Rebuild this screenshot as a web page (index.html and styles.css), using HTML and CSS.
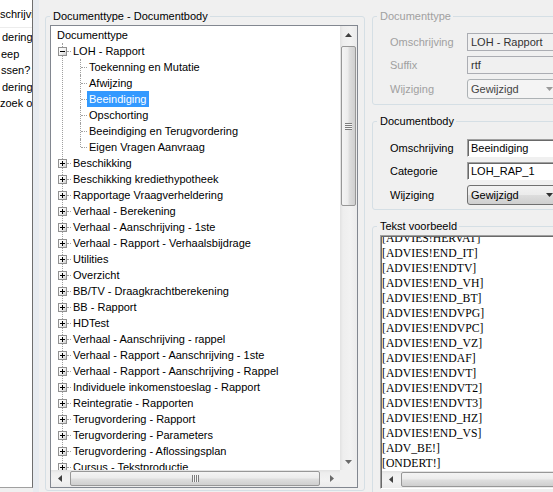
FILE: index.html
```html
<!DOCTYPE html>
<html>
<head>
<meta charset="utf-8">
<link rel="stylesheet" href="styles.css">
</head>
<body>
<svg width="0" height="0" class="defs">
  <defs>
    <linearGradient id="expg" x1="0" y1="0" x2="1" y2="1">
      <stop offset="0" stop-color="#ffffff"/>
      <stop offset="0.5" stop-color="#f4f4f4"/>
      <stop offset="1" stop-color="#c8c8c8"/>
    </linearGradient>
  </defs>
</svg>
<div class="app">
  <div class="sidelist">
    <div class="sl-head">schrijving</div>
    <div class="sl-rows">
      <div class="sl-row">deringen</div>
      <div class="sl-row sl-tight">eep</div>
      <div class="sl-row sl-tight">ssen?</div>
      <div class="sl-row">deringen</div>
      <div class="sl-row sl-zero">zoek om</div>
    </div>
  </div>
  <div class="sep"></div>

  <fieldset class="group main-group">
    <legend>Documenttype - Documentbody</legend>
    <div class="tree">
      <div class="tree-view">
        <div class="row root"><span class="lbl">Documenttype</span></div>
        <div class="lvl1">
          <div class="row"><svg class="exp" width="9" height="9" viewBox="0 0 9 9"><rect x="0.5" y="0.5" width="8" height="8" fill="url(#expg)" stroke="#919191"/><path d="M2 4.5h5" stroke="#000"/></svg><i class="hl"></i><span class="lbl">LOH - Rapport</span></div>
          <div class="kids">
            <div class="row l2"><i class="vl"></i><i class="hl2"></i><span class="lbl">Toekenning en Mutatie</span></div>
            <div class="row l2"><i class="vl"></i><i class="hl2"></i><span class="lbl">Afwijzing</span></div>
            <div class="row l2"><i class="vl"></i><i class="hl2"></i><span class="lbl sel">Beeindiging</span></div>
            <div class="row l2"><i class="vl"></i><i class="hl2"></i><span class="lbl">Opschorting</span></div>
            <div class="row l2"><i class="vl"></i><i class="hl2"></i><span class="lbl">Beeindiging en Terugvordering</span></div>
            <div class="row l2"><i class="vl vl-last"></i><i class="hl2"></i><span class="lbl">Eigen Vragen Aanvraag</span></div>
          </div>
          <div class="row"><svg class="exp" width="9" height="9" viewBox="0 0 9 9"><rect x="0.5" y="0.5" width="8" height="8" fill="url(#expg)" stroke="#919191"/><path d="M2 4.5h5M4.5 2v5" stroke="#000"/></svg><i class="hl"></i><span class="lbl">Beschikking</span></div>
          <div class="row"><svg class="exp" width="9" height="9" viewBox="0 0 9 9"><rect x="0.5" y="0.5" width="8" height="8" fill="url(#expg)" stroke="#919191"/><path d="M2 4.5h5M4.5 2v5" stroke="#000"/></svg><i class="hl"></i><span class="lbl">Beschikking krediethypotheek</span></div>
          <div class="row"><svg class="exp" width="9" height="9" viewBox="0 0 9 9"><rect x="0.5" y="0.5" width="8" height="8" fill="url(#expg)" stroke="#919191"/><path d="M2 4.5h5M4.5 2v5" stroke="#000"/></svg><i class="hl"></i><span class="lbl">Rapportage Vraagverheldering</span></div>
          <div class="row"><svg class="exp" width="9" height="9" viewBox="0 0 9 9"><rect x="0.5" y="0.5" width="8" height="8" fill="url(#expg)" stroke="#919191"/><path d="M2 4.5h5M4.5 2v5" stroke="#000"/></svg><i class="hl"></i><span class="lbl">Verhaal - Berekening</span></div>
          <div class="row"><svg class="exp" width="9" height="9" viewBox="0 0 9 9"><rect x="0.5" y="0.5" width="8" height="8" fill="url(#expg)" stroke="#919191"/><path d="M2 4.5h5M4.5 2v5" stroke="#000"/></svg><i class="hl"></i><span class="lbl">Verhaal - Aanschrijving - 1ste</span></div>
          <div class="row"><svg class="exp" width="9" height="9" viewBox="0 0 9 9"><rect x="0.5" y="0.5" width="8" height="8" fill="url(#expg)" stroke="#919191"/><path d="M2 4.5h5M4.5 2v5" stroke="#000"/></svg><i class="hl"></i><span class="lbl">Verhaal - Rapport - Verhaalsbijdrage</span></div>
          <div class="row"><svg class="exp" width="9" height="9" viewBox="0 0 9 9"><rect x="0.5" y="0.5" width="8" height="8" fill="url(#expg)" stroke="#919191"/><path d="M2 4.5h5M4.5 2v5" stroke="#000"/></svg><i class="hl"></i><span class="lbl">Utilities</span></div>
          <div class="row"><svg class="exp" width="9" height="9" viewBox="0 0 9 9"><rect x="0.5" y="0.5" width="8" height="8" fill="url(#expg)" stroke="#919191"/><path d="M2 4.5h5M4.5 2v5" stroke="#000"/></svg><i class="hl"></i><span class="lbl">Overzicht</span></div>
          <div class="row"><svg class="exp" width="9" height="9" viewBox="0 0 9 9"><rect x="0.5" y="0.5" width="8" height="8" fill="url(#expg)" stroke="#919191"/><path d="M2 4.5h5M4.5 2v5" stroke="#000"/></svg><i class="hl"></i><span class="lbl">BB/TV - Draagkrachtberekening</span></div>
          <div class="row"><svg class="exp" width="9" height="9" viewBox="0 0 9 9"><rect x="0.5" y="0.5" width="8" height="8" fill="url(#expg)" stroke="#919191"/><path d="M2 4.5h5M4.5 2v5" stroke="#000"/></svg><i class="hl"></i><span class="lbl">BB - Rapport</span></div>
          <div class="row"><svg class="exp" width="9" height="9" viewBox="0 0 9 9"><rect x="0.5" y="0.5" width="8" height="8" fill="url(#expg)" stroke="#919191"/><path d="M2 4.5h5M4.5 2v5" stroke="#000"/></svg><i class="hl"></i><span class="lbl">HDTest</span></div>
          <div class="row"><svg class="exp" width="9" height="9" viewBox="0 0 9 9"><rect x="0.5" y="0.5" width="8" height="8" fill="url(#expg)" stroke="#919191"/><path d="M2 4.5h5M4.5 2v5" stroke="#000"/></svg><i class="hl"></i><span class="lbl">Verhaal - Aanschrijving - rappel</span></div>
          <div class="row"><svg class="exp" width="9" height="9" viewBox="0 0 9 9"><rect x="0.5" y="0.5" width="8" height="8" fill="url(#expg)" stroke="#919191"/><path d="M2 4.5h5M4.5 2v5" stroke="#000"/></svg><i class="hl"></i><span class="lbl">Verhaal - Rapport - Aanschrijving - 1ste</span></div>
          <div class="row"><svg class="exp" width="9" height="9" viewBox="0 0 9 9"><rect x="0.5" y="0.5" width="8" height="8" fill="url(#expg)" stroke="#919191"/><path d="M2 4.5h5M4.5 2v5" stroke="#000"/></svg><i class="hl"></i><span class="lbl">Verhaal - Rapport - Aanschrijving - Rappel</span></div>
          <div class="row"><svg class="exp" width="9" height="9" viewBox="0 0 9 9"><rect x="0.5" y="0.5" width="8" height="8" fill="url(#expg)" stroke="#919191"/><path d="M2 4.5h5M4.5 2v5" stroke="#000"/></svg><i class="hl"></i><span class="lbl">Individuele inkomenstoeslag - Rapport</span></div>
          <div class="row"><svg class="exp" width="9" height="9" viewBox="0 0 9 9"><rect x="0.5" y="0.5" width="8" height="8" fill="url(#expg)" stroke="#919191"/><path d="M2 4.5h5M4.5 2v5" stroke="#000"/></svg><i class="hl"></i><span class="lbl">Reintegratie - Rapporten</span></div>
          <div class="row"><svg class="exp" width="9" height="9" viewBox="0 0 9 9"><rect x="0.5" y="0.5" width="8" height="8" fill="url(#expg)" stroke="#919191"/><path d="M2 4.5h5M4.5 2v5" stroke="#000"/></svg><i class="hl"></i><span class="lbl">Terugvordering - Rapport</span></div>
          <div class="row"><svg class="exp" width="9" height="9" viewBox="0 0 9 9"><rect x="0.5" y="0.5" width="8" height="8" fill="url(#expg)" stroke="#919191"/><path d="M2 4.5h5M4.5 2v5" stroke="#000"/></svg><i class="hl"></i><span class="lbl">Terugvordering - Parameters</span></div>
          <div class="row"><svg class="exp" width="9" height="9" viewBox="0 0 9 9"><rect x="0.5" y="0.5" width="8" height="8" fill="url(#expg)" stroke="#919191"/><path d="M2 4.5h5M4.5 2v5" stroke="#000"/></svg><i class="hl"></i><span class="lbl">Terugvordering - Aflossingsplan</span></div>
          <div class="row"><svg class="exp" width="9" height="9" viewBox="0 0 9 9"><rect x="0.5" y="0.5" width="8" height="8" fill="url(#expg)" stroke="#919191"/><path d="M2 4.5h5M4.5 2v5" stroke="#000"/></svg><i class="hl"></i><span class="lbl">Cursus - Tekstproductie</span></div>
          <div class="row"><svg class="exp" width="9" height="9" viewBox="0 0 9 9"><rect x="0.5" y="0.5" width="8" height="8" fill="url(#expg)" stroke="#919191"/><path d="M2 4.5h5M4.5 2v5" stroke="#000"/></svg><i class="hl"></i><span class="lbl">Cursus - Rapport</span></div>
        </div>
      </div>
      <div class="vscroll">
        <div class="sb-btn"><svg width="7" height="4" viewBox="0 0 7 4"><path d="M3.5 0L7 4H0Z" fill="#404040"/></svg></div>
        <div class="vtrack"><div class="thumb-v"><div class="grip-v"></div></div></div>
        <div class="sb-btn"><svg width="7" height="4" viewBox="0 0 7 4"><path d="M0 0H7L3.5 4Z" fill="#6a6a6a"/></svg></div>
      </div>
      <div class="hscroll">
        <div class="sb-btn"><svg width="4" height="7" viewBox="0 0 4 7"><path d="M0 3.5L4 0V7Z" fill="#404040"/></svg></div>
        <div class="htrack"><div class="thumb-h"><div class="grip-h"></div></div></div>
        <div class="sb-btn"><svg width="4" height="7" viewBox="0 0 4 7"><path d="M0 0L4 3.5L0 7Z" fill="#6a6a6a"/></svg></div>
      </div>
      <div class="corner"></div>
    </div>
  </fieldset>

  <div class="right-col">
    <fieldset class="group g1">
      <legend class="dis">Documenttype</legend>
      <div class="fields">
        <span class="flabel dis">Omschrijving</span>
        <div class="inp">LOH - Rapport</div>
        <span class="flabel dis">Suffix</span>
        <div class="inp">rtf</div>
        <span class="flabel dis">Wijziging</span>
        <div class="combo combo-dis"><span>Gewijzigd</span><svg width="7" height="4" viewBox="0 0 7 4"><path d="M0 0H7L3.5 4Z" fill="#9a9a9a"/></svg></div>
      </div>
    </fieldset>
    <fieldset class="group g2">
      <legend>Documentbody</legend>
      <div class="fields">
        <span class="flabel">Omschrijving</span>
        <div class="inp en">Beeindiging</div>
        <span class="flabel">Categorie</span>
        <div class="inp en">LOH_RAP_1</div>
        <span class="flabel">Wijziging</span>
        <div class="combo"><span>Gewijzigd</span><svg width="7" height="4" viewBox="0 0 7 4"><path d="M0 0H7L3.5 4Z" fill="#303030"/></svg></div>
      </div>
    </fieldset>
    <fieldset class="group g3">
      <legend>Tekst voorbeeld</legend>
      <div class="textbox">
        <div class="tb-text">
          <div class="tb-lines">
            <div>[ADVIES!HERVAT]</div>
            <div>[ADVIES!END_IT]</div>
            <div>[ADVIES!ENDTV]</div>
            <div>[ADVIES!END_VH]</div>
            <div>[ADVIES!END_BT]</div>
            <div>[ADVIES!ENDVPG]</div>
            <div>[ADVIES!ENDVPC]</div>
            <div>[ADVIES!END_VZ]</div>
            <div>[ADVIES!ENDAF]</div>
            <div>[ADVIES!ENDVT]</div>
            <div>[ADVIES!ENDVT2]</div>
            <div>[ADVIES!ENDVT3]</div>
            <div>[ADVIES!END_HZ]</div>
            <div>[ADVIES!END_VS]</div>
            <div>[ADV_BE!]</div>
            <div>[ONDERT!]</div>
            <div>[ADVIES!SLOT]</div>
          </div>
        </div>
        <div class="hscroll tb-hscroll">
          <div class="sb-btn"><svg width="4" height="7" viewBox="0 0 4 7"><path d="M0 3.5L4 0V7Z" fill="#404040"/></svg></div>
          <div class="htrack"><div class="thumb-h thumb-wide"></div></div>
        </div>
      </div>
    </fieldset>
  </div>
</div>
</body>
</html>
```

FILE: styles.css
```css
* { box-sizing: border-box; }
html, body { margin: 0; padding: 0; }
body {
  width: 553px;
  height: 492px;
  overflow: hidden;
  background: #f0f0f0;
  font: 11px/13px "Liberation Sans", Arial, sans-serif;
  color: #000;
}
.defs { position: absolute; }
.app { display: flex; align-items: flex-start; height: 492px; }

/* left list */
.sidelist {
  width: 33px;
  height: 488px;
  flex: none;
  background: #fff;
  border-right: 1px solid #6e6e6e;
  border-bottom: 1px solid #a0a0a0;
  overflow: hidden;
  white-space: nowrap;
}
.sl-head { height: 28px; padding-top: 8px; border-bottom: 1px solid #ececec; }
.sl-rows { padding-top: 1px; }
.sl-row { height: 16.5px; line-height: 16.5px; padding-left: 2px; }
.sl-tight { padding-left: 1px; }
.sl-zero { padding-left: 0; }
.sep { width: 6px; height: 492px; flex: none; background: #e7ebf0; }

/* group boxes */
.group {
  margin: 0;
  min-width: 0;
  border: 1px solid #d5dfe5;
  border-radius: 3px;
  padding: 0 0 0 4px;
}
.group legend { padding: 0 2px 0 3px; line-height: 13px; }
.dis { color: #a0a0a0; }

.main-group {
  flex: none;
  width: 320px;
  margin: 10px 0 0 6px;
  padding: 2px 6px 2px 4px;
}

/* tree */
.tree {
  width: 308px;
  height: 463px;
  border: 1px solid #828790;
  background: #fff;
  display: grid;
  grid-template-columns: 1fr 17px;
  grid-template-rows: 1fr 17px;
}
.tree-view { overflow: hidden; padding-top: 1px; white-space: nowrap; }
.row { display: flex; align-items: center; height: 16px; }
.lbl { display: block; padding: 0 2px; line-height: 16px; height: 16px; }
.lbl.sel { background: #3399ff; color: #fff; }
.root { padding-left: 4px; }
.lvl1 { margin-left: 11px; border-left: 1px dotted #a0a0a0; }
.exp { flex: none; margin-left: -5px; display: block; }
.hl { flex: none; width: 4px; height: 0; border-top: 1px dotted #a0a0a0; }
.l2 { padding-left: 17px; align-items: stretch; }
.l2 .hl2 { flex: none; width: 6px; height: 0; border-top: 1px dotted #a0a0a0; align-self: center; }
.vl { flex: none; width: 0; border-left: 1px dotted #a0a0a0; }
.vl-last { height: 8px; align-self: flex-start; }

/* scrollbars */
.sb-btn {
  flex: none;
  width: 17px;
  height: 17px;
  display: flex;
  align-items: center;
  justify-content: center;
}
.sb-btn svg { display: block; }
.vscroll {
  display: flex;
  flex-direction: column;
  background: linear-gradient(90deg, #e2e2e2 0, #eeeeee 3px, #f2f2f2 60%, #ebebeb 100%);
}
.vtrack { flex: 1; padding-top: 3px; }
.thumb-v {
  width: 15px;
  height: 160px;
  margin-left: 1px;
  border: 1px solid #979797;
  border-radius: 2px;
  background: linear-gradient(90deg, #f4f4f4 0%, #ececec 45%, #dedede 55%, #cfcfcf 100%);
  display: flex;
  align-items: center;
  justify-content: center;
}
.grip-v {
  width: 7px;
  height: 7px;
  background: repeating-linear-gradient(180deg, #7d7d7d 0 1px, #f6f6f6 1px 2px);
}
.hscroll {
  display: flex;
  background: linear-gradient(180deg, #e2e2e2 0, #eeeeee 3px, #f2f2f2 60%, #ebebeb 100%);
}
.htrack { flex: 1; padding: 1px 3px 0 2px; overflow: hidden; }
.thumb-h {
  height: 15px;
  border: 1px solid #979797;
  border-radius: 2px;
  background: linear-gradient(180deg, #f4f4f4 0%, #ececec 45%, #dedede 55%, #cfcfcf 100%);
  display: flex;
  align-items: center;
  justify-content: center;
}
.grip-h {
  width: 7px;
  height: 7px;
  background: repeating-linear-gradient(90deg, #7d7d7d 0 1px, #f6f6f6 1px 2px);
}
.thumb-wide { width: 240px; }
.corner { background: #f0f0f0; }

/* right column */
.right-col { flex: none; width: 200px; margin-left: 7px; }
.g1 { margin-top: 10px; padding: 10px 0 5px 4px; }
.g2 { margin-top: 10px; padding: 11px 0 4px 4px; }
.g3 { margin-top: 10px; padding: 2px 0 0 4px; height: 280px; }

.fields {
  display: grid;
  grid-template-columns: 77px auto;
  row-gap: 5px;
  align-items: center;
  margin-left: 13px;
}
.flabel { white-space: nowrap; }
.inp {
  width: 100px;
  height: 18px;
  border: 1px solid #abadb3;
  background: #f0f0f0;
  padding: 0 3px;
  line-height: 16px;
  color: #333;
  white-space: nowrap;
  overflow: hidden;
}
.inp.en {
  background: #fff;
  color: #000;
  border-color: #a0a0a0 #ffffff #ffffff #a0a0a0;
  box-shadow: inset 1px 1px 0 #696969;
}
.combo {
  width: 95px;
  height: 20px;
  border: 1px solid #707070;
  border-radius: 3px;
  background: linear-gradient(180deg, #f2f2f2 0%, #ebebeb 50%, #dddddd 51%, #cfcfcf 100%);
  display: flex;
  align-items: center;
  justify-content: space-between;
  padding: 0 8px 0 3px;
  white-space: nowrap;
}
.combo svg { display: block; }
.combo-dis {
  border-color: #adb2b5;
  background: #f4f4f4;
  color: #444;
}

/* text preview */
.textbox {
  margin-left: 3px;
  width: 195px;
  height: 254px;
  border: 1px solid;
  border-color: #a0a0a0 #ffffff #ffffff #a0a0a0;
  box-shadow: inset 1px 1px 0 #696969;
  background: #fff;
  padding: 1px 0 0 1px;
  display: grid;
  grid-template-rows: 1fr 17px;
}
.tb-text {
  overflow: hidden;
  font: 13px/15px "Liberation Serif", "Times New Roman", serif;
  white-space: nowrap;
}
.tb-lines {
  margin-top: -7px;
  transform: scaleX(0.9);
  transform-origin: 0 0;
}
```
